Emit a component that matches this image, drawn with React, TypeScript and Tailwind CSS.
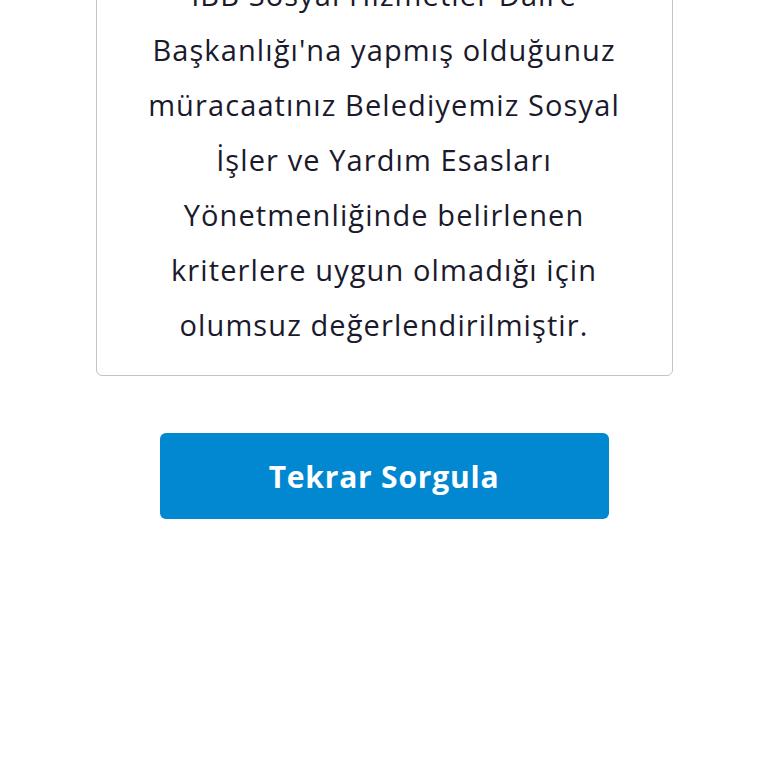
import React from 'react';

const LINES = [
  'İBB Sosyal Hizmetler Daire',
  "Başkanlığı'na yapmış olduğunuz",
  'müracaatınız Belediyemiz Sosyal',
  'İşler ve Yardım Esasları',
  'Yönetmenliğinde belirlenen',
  'kriterlere uygun olmadığı için',
  'olumsuz değerlendirilmiştir.',
];

export default function App() {
  return (
    <div className="w-[768px] h-[768px] overflow-hidden bg-white font-['Open_Sans',sans-serif]">
      <div className="flex flex-col items-center">
        {/* Result card */}
        <div className="mt-[-34px] w-[577px] rounded-[6px] border border-[#c4c4c4] bg-white pb-[23px] px-2">
          <p className="text-center text-[29px] leading-[55px] tracking-[1.1px] text-[#1a1a2c]">
            {LINES.map((line, i) => (
              <React.Fragment key={i}>
                {line}
                {i < LINES.length - 1 && <br />}
              </React.Fragment>
            ))}
          </p>
        </div>

        <button className="mt-[57px] h-[86px] w-[449px] rounded-[6px] bg-[#0288d1] text-[30px] font-bold tracking-[0.8px] text-white">
          Tekrar Sorgula
        </button>
      </div>
    </div>
  );
}
